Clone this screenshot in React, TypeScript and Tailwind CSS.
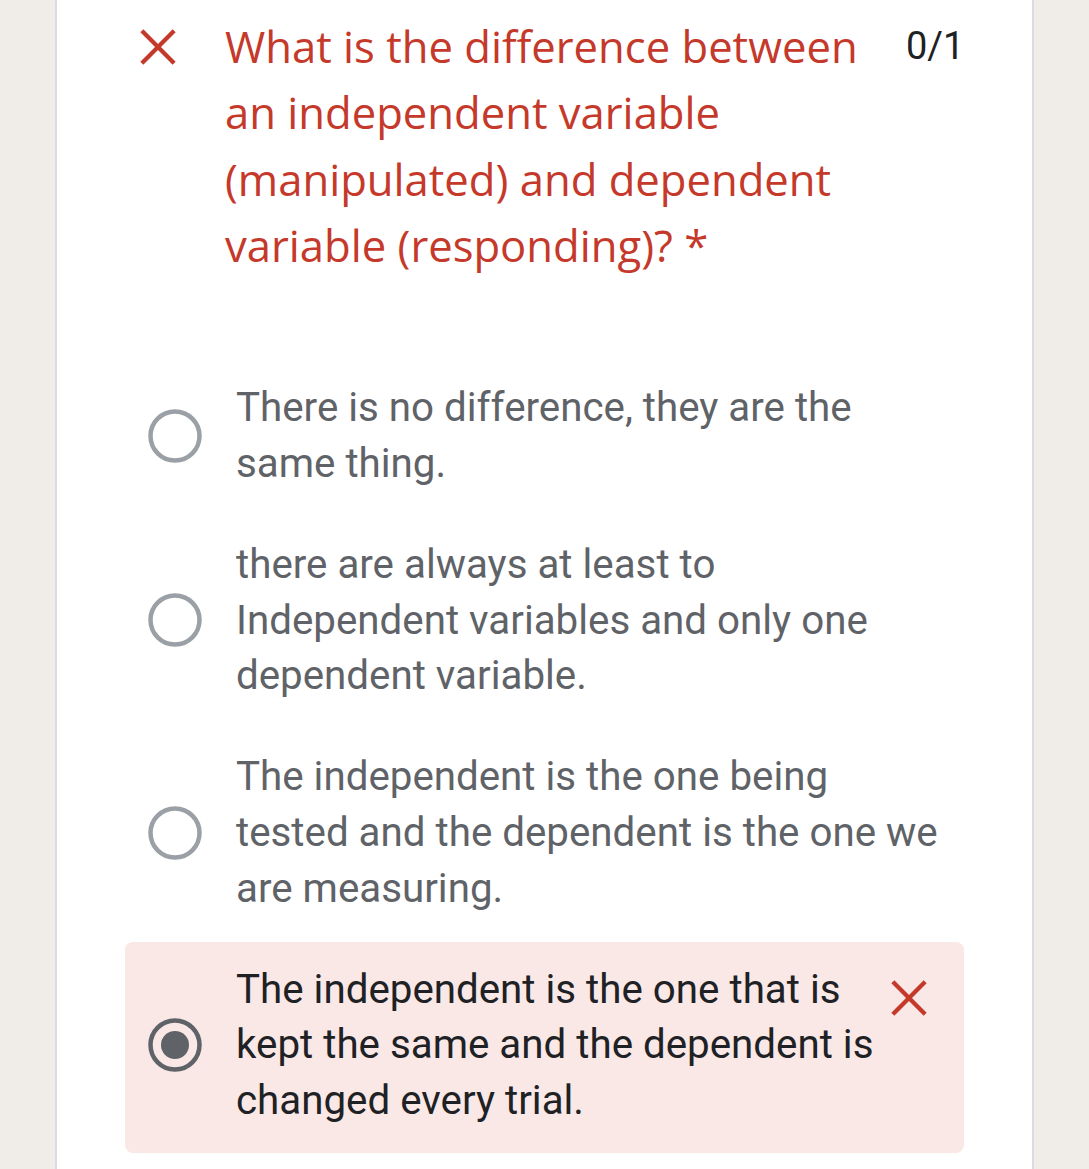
import React from "react";

const XIcon = ({ className }: { className?: string }) => (
  <svg viewBox="0 0 40 40" className={className} fill="none" stroke="#c5392b" strokeWidth="4.5" strokeLinecap="butt">
    <path d="M3 3 L37 37 M37 3 L3 37" />
  </svg>
);

const Radio = ({ checked }: { checked?: boolean }) => (
  <svg viewBox="0 0 54 54" className="w-[54px] h-[54px] shrink-0">
    <circle cx="27" cy="27" r="24.5" fill="none" stroke={checked ? "#5f6368" : "#9aa0a6"} strokeWidth="4.5" />
    {checked && <circle cx="27" cy="27" r="14" fill="#5f6368" />}
  </svg>
);

const options = [
  "There is no difference, they are the same thing.",
  "there are always at least to Independent variables and only one dependent variable.",
  "The independent is the one being tested and the dependent is the one we are measuring.",
];

export default function App() {
  return (
    <div className="min-h-screen bg-[#f0ece7]">
      <div className="ml-[55px] w-[979px] h-[1169px] overflow-hidden bg-white border-x-2 border-[#dadce0]">
        <div className="flex items-start pt-[13px] pl-[82px]">
          <XIcon className="w-[38px] h-[38px] mt-[15px] shrink-0" />
          <div
            className="ml-[48px] w-[655px] text-[43.6px] leading-[66.3px] text-[#c5392b]"
            style={{ fontFamily: '"Open Sans", sans-serif' }}
          >
            What is the difference between an independent variable (manipulated) and dependent variable (responding)? *
          </div>
          <div
            className="ml-[26px] text-[38px] leading-[66px] text-[#202124]"
            style={{ fontFamily: "Roboto, sans-serif" }}
          >
            0/1
          </div>
        </div>

        <div className="mt-[82px] ml-[68px] w-[839px] flex flex-col gap-[2px]" style={{ fontFamily: "Roboto, sans-serif" }}>
          {options.map((o) => (
            <div key={o} className="flex items-center pl-[23px] pr-[20px] pt-[20px] pb-[23px] rounded-lg">
              <Radio />
              <div className="ml-[34px] flex-1 text-[40.3px] leading-[55.8px] text-[#5f6368]">{o}</div>
            </div>
          ))}
          <div className="flex items-center pl-[23px] pr-[36px] pt-[20px] pb-[24px] rounded-lg bg-[#f9e8e6]">
            <Radio checked />
            <div className="ml-[34px] flex-1 text-[40.3px] leading-[55.8px] text-[#202124]">
              The independent is the one that is kept the same and the dependent is changed every trial.
            </div>
            <XIcon className="w-[38px] h-[38px] self-start mt-[17px] ml-[10px] shrink-0" />
          </div>
        </div>
      </div>
    </div>
  );
}
